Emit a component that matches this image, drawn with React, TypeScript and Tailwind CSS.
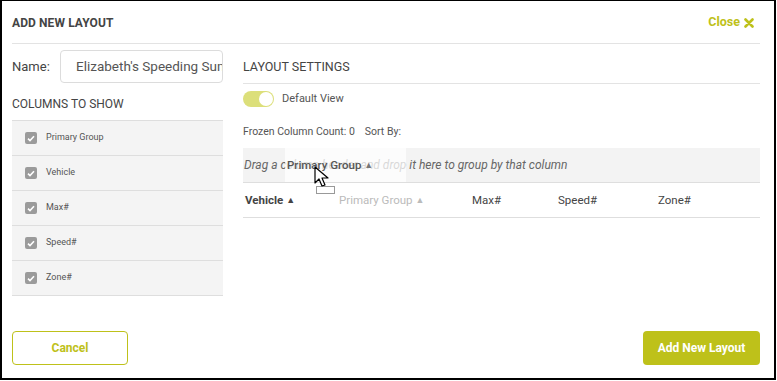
import React from "react";

const olive = "#bec11a";

function Check() {
  return (
    <span className="w-[12px] h-[12px] rounded-[2px] bg-[#9b9b9b] flex items-center justify-center shrink-0">
      <svg width="8" height="7" viewBox="0 0 8 7">
        <path d="M1 3.6 L3 5.5 L7 1.3" stroke="#fff" strokeWidth="1.6" fill="none" />
      </svg>
    </span>
  );
}

const cols = ["Primary Group", "Vehicle", "Max#", "Speed#", "Zone#"];

export default function App() {
  return (
    <div className="w-[777px] h-[381px] bg-white" style={{ fontFamily: "Roboto, 'Liberation Sans', sans-serif" }}>
      <div className="w-[776px] h-[380px] border-t border-l-2 border-r-2 border-b-2 border-black flex flex-col text-[#444]">
        {/* header */}
        <div className="ml-[10px] mr-[14px] h-[43px] border-b border-[#e3e3e3] flex items-center justify-between pt-[1px]">
          <div className="font-bold text-[12px] tracking-[0.1px]">ADD NEW LAYOUT</div>
          <div className="font-bold text-[12.5px] flex items-center gap-[4px] mr-[6px]" style={{ color: olive }}>
            Close
            <svg width="10" height="10" viewBox="0 0 10 10">
              <path d="M1.5 1.5 L8.5 8.5 M8.5 1.5 L1.5 8.5" stroke={olive} strokeWidth="2.6" strokeLinecap="round" />
            </svg>
          </div>
        </div>
        {/* body */}
        <div className="flex flex-1 ml-[10px] mr-[14px]">
          {/* left */}
          <div className="w-[211px] flex flex-col">
            <div className="flex items-center mt-[6px] h-[33px]">
              <span className="text-[13px] w-[48px]">Name:</span>
              <div className="flex-1 h-[33px] border border-[#dcdcdc] rounded-[4px] flex items-center pl-[15px] overflow-hidden whitespace-nowrap text-[13.5px] text-[#555]">
                Elizabeth's Speeding Summary
              </div>
            </div>
            <div className="text-[12px] mt-[14px] leading-[14px]">COLUMNS TO SHOW</div>
            <div className="mt-[9px] border-t border-[#dedede]">
              {cols.map((c) => (
                <div key={c} className="h-[35px] bg-[#f4f4f4] border-b border-[#dedede] flex items-center pl-[13px] gap-[9px]">
                  <Check />
                  <span className="text-[9px] text-[#555]">{c}</span>
                </div>
              ))}
            </div>
          </div>
          {/* right */}
          <div className="flex-1 ml-[20px] flex flex-col">
            <div className="h-[40px] border-b border-[#e3e3e3] flex items-center pt-[7px] text-[12.5px]">LAYOUT SETTINGS</div>
            <div className="flex items-center mt-[7px] gap-[8px]">
              <div className="w-[31px] h-[16px] rounded-full bg-[#dcdf7a] relative">
                <div className="absolute right-[1px] top-[1px] w-[14px] h-[14px] rounded-full bg-white" />
              </div>
              <span className="text-[11px] text-[#555]">Default View</span>
            </div>
            <div className="text-[10.5px] text-[#555] mt-[16px] flex gap-[10px]">
              <span>Frozen Column Count: 0</span>
              <span>Sort By:</span>
            </div>
            <div className="relative mt-[9px] h-[35px] bg-[#f3f3f3] border-b border-[#dedede] flex items-center">
              <span className="italic text-[12px] text-[#666] pl-[1px] whitespace-nowrap">Drag a column header and drop it here to group by that column</span>
              <div className="absolute left-[42px] top-0 w-[121px] h-[34px] bg-white/75 flex items-center pl-[2px]">
                <span className="text-[11.5px] font-medium text-[#555]">Primary Group</span>
                <span className="text-[9px] text-[#777] ml-[3px]">▲</span>
              </div>
              <svg className="absolute left-[71px] top-[18px]" width="24" height="30" viewBox="0 0 24 30">
                <path d="M1 1 L1 17 L5 13 L8 20 L11 19 L8 12 L14 12 Z" fill="#fff" stroke="#000" strokeWidth="1.2" strokeLinejoin="round" />
                <rect x="2.5" y="20.5" width="18" height="7" fill="none" stroke="#333" strokeWidth="1" strokeDasharray="1 1" />
              </svg>
            </div>
            <div className="h-[35px] border-b border-[#dedede] flex items-center text-[11.5px]">
              <div className="w-[96px] pl-[2px] font-bold text-[#444] flex items-center">
                Vehicle<span className="text-[9px] ml-[3px]">▲</span>
              </div>
              <div className="w-[133px] text-[#bbb] flex items-center">
                Primary Group<span className="text-[9px] ml-[3px]">▲</span>
              </div>
              <div className="w-[86px] text-[#444]">Max#</div>
              <div className="w-[100px] text-[#444]">Speed#</div>
              <div className="text-[#444]">Zone#</div>
            </div>
          </div>
        </div>
        {/* footer */}
        <div className="ml-[10px] mr-[14px] mb-[13px] flex justify-between">
          <button className="w-[116px] h-[34px] rounded-[4px] border bg-white text-[12px] font-bold" style={{ borderColor: olive, color: olive }}>
            Cancel
          </button>
          <button className="w-[117px] h-[34px] rounded-[4px] text-white text-[12px] font-bold" style={{ backgroundColor: olive }}>
            Add New Layout
          </button>
        </div>
      </div>
    </div>
  );
}
